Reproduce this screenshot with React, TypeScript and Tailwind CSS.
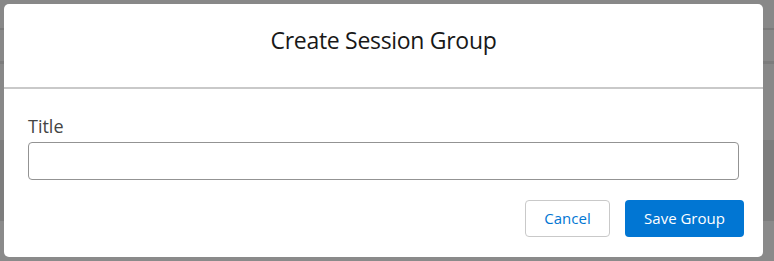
import React from 'react';

const App: React.FC = () => {
  return (
    <div className="relative w-[774px] h-[261px] overflow-hidden bg-[#888888]" style={{ fontFamily: '"Open Sans", "Noto Sans", sans-serif' }}>
      {/* backdrop page content, dimmed */}
      <div className="flex flex-col h-full">
        <div className="h-[28px]" />
        <div className="h-[2px] bg-[#7a7a7a]" />
        <div className="h-[31px]" />
        <div className="h-[3px] bg-[#7c7c7c]" />
        <div className="h-[76px]" />
        <div className="h-[81px] bg-[#7d7d7d]" />
        <div className="flex-1 bg-[#8a8a8a]" />
      </div>

      {/* Modal */}
      <div className="absolute left-[4px] top-[4px] w-[759px] h-[253px] bg-white rounded-[5px] flex flex-col">
        <header className="h-[85px] flex items-start justify-center pt-[20px] border-b-2 border-[#c9c9c9]">
          <h2 className="text-[23px] leading-[32px] text-[#181818] tracking-[-0.3px]">Create Session Group</h2>
        </header>
        <div className="px-[24px] pt-[26px] flex flex-col">
          <label className="text-[18px] leading-[22px] text-[#444444]">Title</label>
          <input className="mt-[5px] h-[38px] w-full rounded-[4px] border border-[#939393] outline-none px-3" />
          <div className="mt-[20px] flex justify-end gap-[15px] mr-[-5px]">
            <button className="h-[37px] w-[85px] rounded-[4px] border border-[#c9c9c9] bg-white text-[#0176d3] text-[15px]">Cancel</button>
            <button className="h-[37px] w-[119px] rounded-[4px] bg-[#0176d3] text-white text-[15px]">Save Group</button>
          </div>
        </div>
      </div>
    </div>
  );
};

export default App;
